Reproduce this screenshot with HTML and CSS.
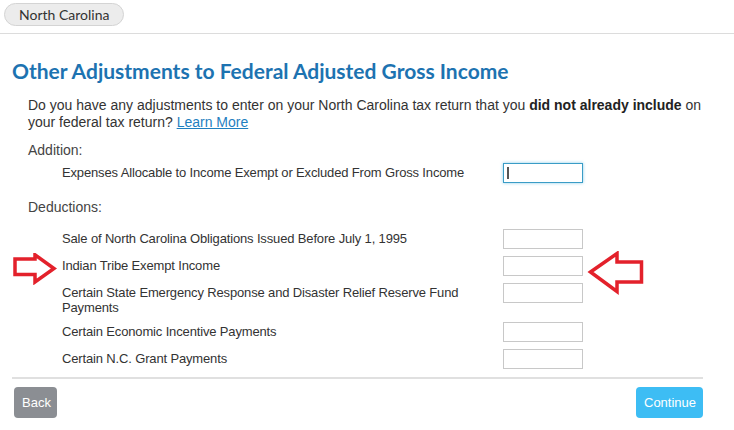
FILE: index.html
```html
<!DOCTYPE html>
<html>
<head>
<meta charset="utf-8">
<link rel="stylesheet" href="styles.css">
</head>
<body>
<div class="page">
  <div class="topbar">
    <span class="pill">North Carolina</span>
  </div>
  <main class="content">
    <h1 class="title">Other Adjustments to Federal Adjusted Gross Income</h1>
    <p class="intro"><span>Do you have any adjustments to enter on your North Carolina tax return that you </span><b>did not already include</b><span> on</span><br><span>your federal tax return? </span><a href="#" class="link">Learn More</a></p>

    <div class="section-label">Addition:</div>
    <div class="rows rows-add">
      <div class="row">
        <span class="label">Expenses Allocable to Income Exempt or Excluded From Gross Income</span>
        <span class="field focused"><span class="caret"></span></span>
      </div>
    </div>

    <div class="section-label section-ded">Deductions:</div>
    <div class="rows rows-ded">
      <div class="row">
        <span class="label">Sale of North Carolina Obligations Issued Before July 1, 1995</span>
        <span class="field"></span>
      </div>
      <div class="row">
        <span class="label">Indian Tribe Exempt Income</span>
        <span class="field"></span>
      </div>
      <div class="row">
        <span class="label">Certain State Emergency Response and Disaster Relief Reserve Fund Payments</span>
        <span class="field"></span>
      </div>
      <div class="row">
        <span class="label">Certain Economic Incentive Payments</span>
        <span class="field"></span>
      </div>
      <div class="row">
        <span class="label">Certain N.C. Grant Payments</span>
        <span class="field"></span>
      </div>
    </div>

    <div class="footer">
      <button class="btn btn-back">Back</button>
      <button class="btn btn-continue">Continue</button>
    </div>
  </main>

  <svg class="arrow arrow-right" width="46" height="32" viewBox="0 0 46 32">
    <path d="M2 6 H22 V1.8 L41 15.5 L22 29 V21.5 H2 Z" fill="none" stroke="#e3212b" stroke-width="3.5" stroke-linejoin="miter"/>
  </svg>
  <svg class="arrow arrow-left" width="58" height="44" viewBox="0 0 58 44">
    <path d="M3.5 21 L30 2.5 V11 H54.5 V31 H30 V40.5 Z" fill="none" stroke="#e3212b" stroke-width="3.5" stroke-linejoin="miter"/>
  </svg>
</div>
</body>
</html>
```

FILE: styles.css
```css
* { box-sizing: border-box; }
html, body { margin: 0; padding: 0; background: #fff; }
body { font-family: "Liberation Sans", Arial, sans-serif; color: #333; }
.page { position: relative; width: 734px; height: 430px; overflow: hidden; }

.topbar {
  height: 34px;
  border-bottom: 1px solid #dcdcdc;
  padding: 3px 0 0 4px;
}
.pill {
  display: inline-block;
  height: 23px;
  line-height: 21px;
  padding: 0 14px;
  border: 1px solid #d4d4d4;
  border-radius: 12px;
  background: #ececec;
  font-family: Lato, "Open Sans", sans-serif;
  font-size: 14px;
  color: #333;
}

.content { padding: 0 31px 0 12px; }
.title {
  margin: 25px 0 0 0;
  font-family: Lato, "Open Sans", sans-serif;
  font-weight: 700;
  font-size: 21px;
  line-height: 24px;
  color: #1d73b1;
}
.intro {
  margin: 14px 0 0 16px;
  font-size: 14px;
  line-height: 17px;
  color: #333;
}
.intro b { color: #222; }
.link { color: #1f7fbf; }

.section-label {
  margin: 11px 0 0 16px;
  font-size: 14px;
  line-height: 16px;
  color: #444;
}
.section-ded { margin-top: 16px; }
.rows { margin: 5px 0 0 50px; display: flex; flex-direction: column; gap: 7px; }
.rows-ded { margin-top: 14px; }
.row { display: grid; grid-template-columns: 441px 80px; align-items: start; }
.label {
  font-size: 13px;
  line-height: 15px;
  letter-spacing: -0.15px;
  color: #333;
  padding-top: 2px;
}
.field {
  display: block;
  width: 80px;
  height: 20px;
  border: 1px solid #c8c8c8;
  background: #fff;
  position: relative;
}
.field.focused {
  border-color: #3a9cc6;
  box-shadow: 0 0 3px rgba(60, 170, 220, 0.6);
}
.caret {
  position: absolute;
  left: 3px;
  top: 3px;
  width: 2px;
  height: 12px;
  background: #555;
}

.footer {
  margin-top: 8px;
  border-top: 2px solid #e0e0e0;
  padding: 8px 0 0 2px;
  display: flex;
  justify-content: space-between;
  width: 691px;
}
.btn {
  height: 31px;
  border: none;
  border-radius: 4px;
  color: #fff;
  font-family: "Liberation Sans", Arial, sans-serif;
  font-size: 13px;
  padding: 0 8px;
}
.btn-back { background: #8b8e93; width: 43px; }
.btn-continue { background: #3dbdf4; width: 67px; }

.arrow { position: absolute; }
.arrow-right { left: 13px; top: 253px; }
.arrow-left { left: 587px; top: 251px; }
```
